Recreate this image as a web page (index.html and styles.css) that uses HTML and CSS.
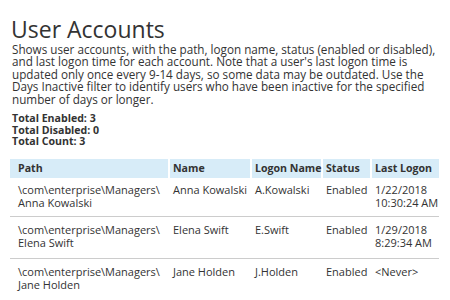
FILE: index.html
```html
<!DOCTYPE html>
<html lang="en">
<head>
  <meta charset="UTF-8" />
  <title>User Accounts</title>
  <link rel="stylesheet" href="styles.css">
</head>
<body>

  <!-- Report header -->
  <h1 class="report-title">User Accounts</h1>
  <p class="report-desc">Shows user accounts, with the path, logon name, status (enabled or disabled), and last logon time for each account. Note that a user's last logon time is updated only once every 9-14 days, so some data may be outdated. Use the Days Inactive filter to identify users who have been inactive for the specified number of days or longer.</p>

  <!-- Totals -->
  <div class="totals">
    <div>Total Enabled: 3</div>
    <div>Total Disabled: 0</div>
    <div>Total Count: 3</div>
  </div>

  <!-- Accounts table -->
  <table class="accounts">
    <colgroup>
      <col class="col-path">
      <col class="col-name">
      <col class="col-logon">
      <col class="col-status">
      <col class="col-last">
    </colgroup>
    <thead>
      <tr>
        <th>Path</th>
        <th>Name</th>
        <th>Logon Name</th>
        <th>Status</th>
        <th>Last Logon</th>
      </tr>
    </thead>
    <tbody>
      <tr>
        <td>\com\enterprise\Managers\<br>Anna Kowalski</td>
        <td>Anna Kowalski</td>
        <td>A.Kowalski</td>
        <td>Enabled</td>
        <td>1/22/2018<br>10:30:24 AM</td>
      </tr>
      <tr>
        <td>\com\enterprise\Managers\<br>Elena Swift</td>
        <td>Elena Swift</td>
        <td>E.Swift</td>
        <td>Enabled</td>
        <td>1/29/2018<br>8:29:34 AM</td>
      </tr>
      <tr>
        <td>\com\enterprise\Managers\<br>Jane Holden</td>
        <td>Jane Holden</td>
        <td>J.Holden</td>
        <td>Enabled</td>
        <td>&lt;Never&gt;</td>
      </tr>
    </tbody>
  </table>

</body>
</html>
```

FILE: styles.css
```css
* {
  margin: 0;
  padding: 0;
  box-sizing: border-box;
}

body {
  font-family: "Open Sans", "Liberation Sans", sans-serif;
  background-color: #fff;
  color: #333;
  padding: 15px 0 0 12px;
}

/* Header */
.report-title {
  font-size: 23px;
  font-weight: normal;
  line-height: 28px;
  margin-left: -1px;
}

.report-desc {
  width: 430px;
  font-size: 11.7px;
  line-height: 12.4px;
}

/* Totals */
.totals {
  font-size: 10.6px;
  font-weight: bold;
  line-height: 11.7px;
  margin-top: 8px;
}

/* Table */
.accounts {
  width: 429px;
  table-layout: fixed;
  margin: 11px 0 0 -2px;
  border-collapse: collapse;
  font-size: 11px;
  line-height: 12.5px;
}

.accounts th {
  background-color: #d7ecf8;
  text-align: left;
  font-weight: bold;
  font-size: 10.6px;
  white-space: nowrap;
  height: 19px;
  padding: 0 0 0 3px;
  border-left: 2px solid #fff;
}

.accounts td {
  vertical-align: top;
  white-space: nowrap;
  padding: 7px 0 9px 4px;
}

.accounts th:first-child,
.accounts td:first-child {
  border-left: none;
  padding-left: 8px;
}

.accounts tbody tr + tr {
  border-top: 1px solid #ccc;
}

.accounts tbody tr:first-child td {
  padding-top: 6px;
  padding-bottom: 7px;
}

.col-path { width: 159px; }
.col-name { width: 82px; }
.col-logon { width: 71px; }
.col-status { width: 49px; }
.col-last { width: 68px; }
```
